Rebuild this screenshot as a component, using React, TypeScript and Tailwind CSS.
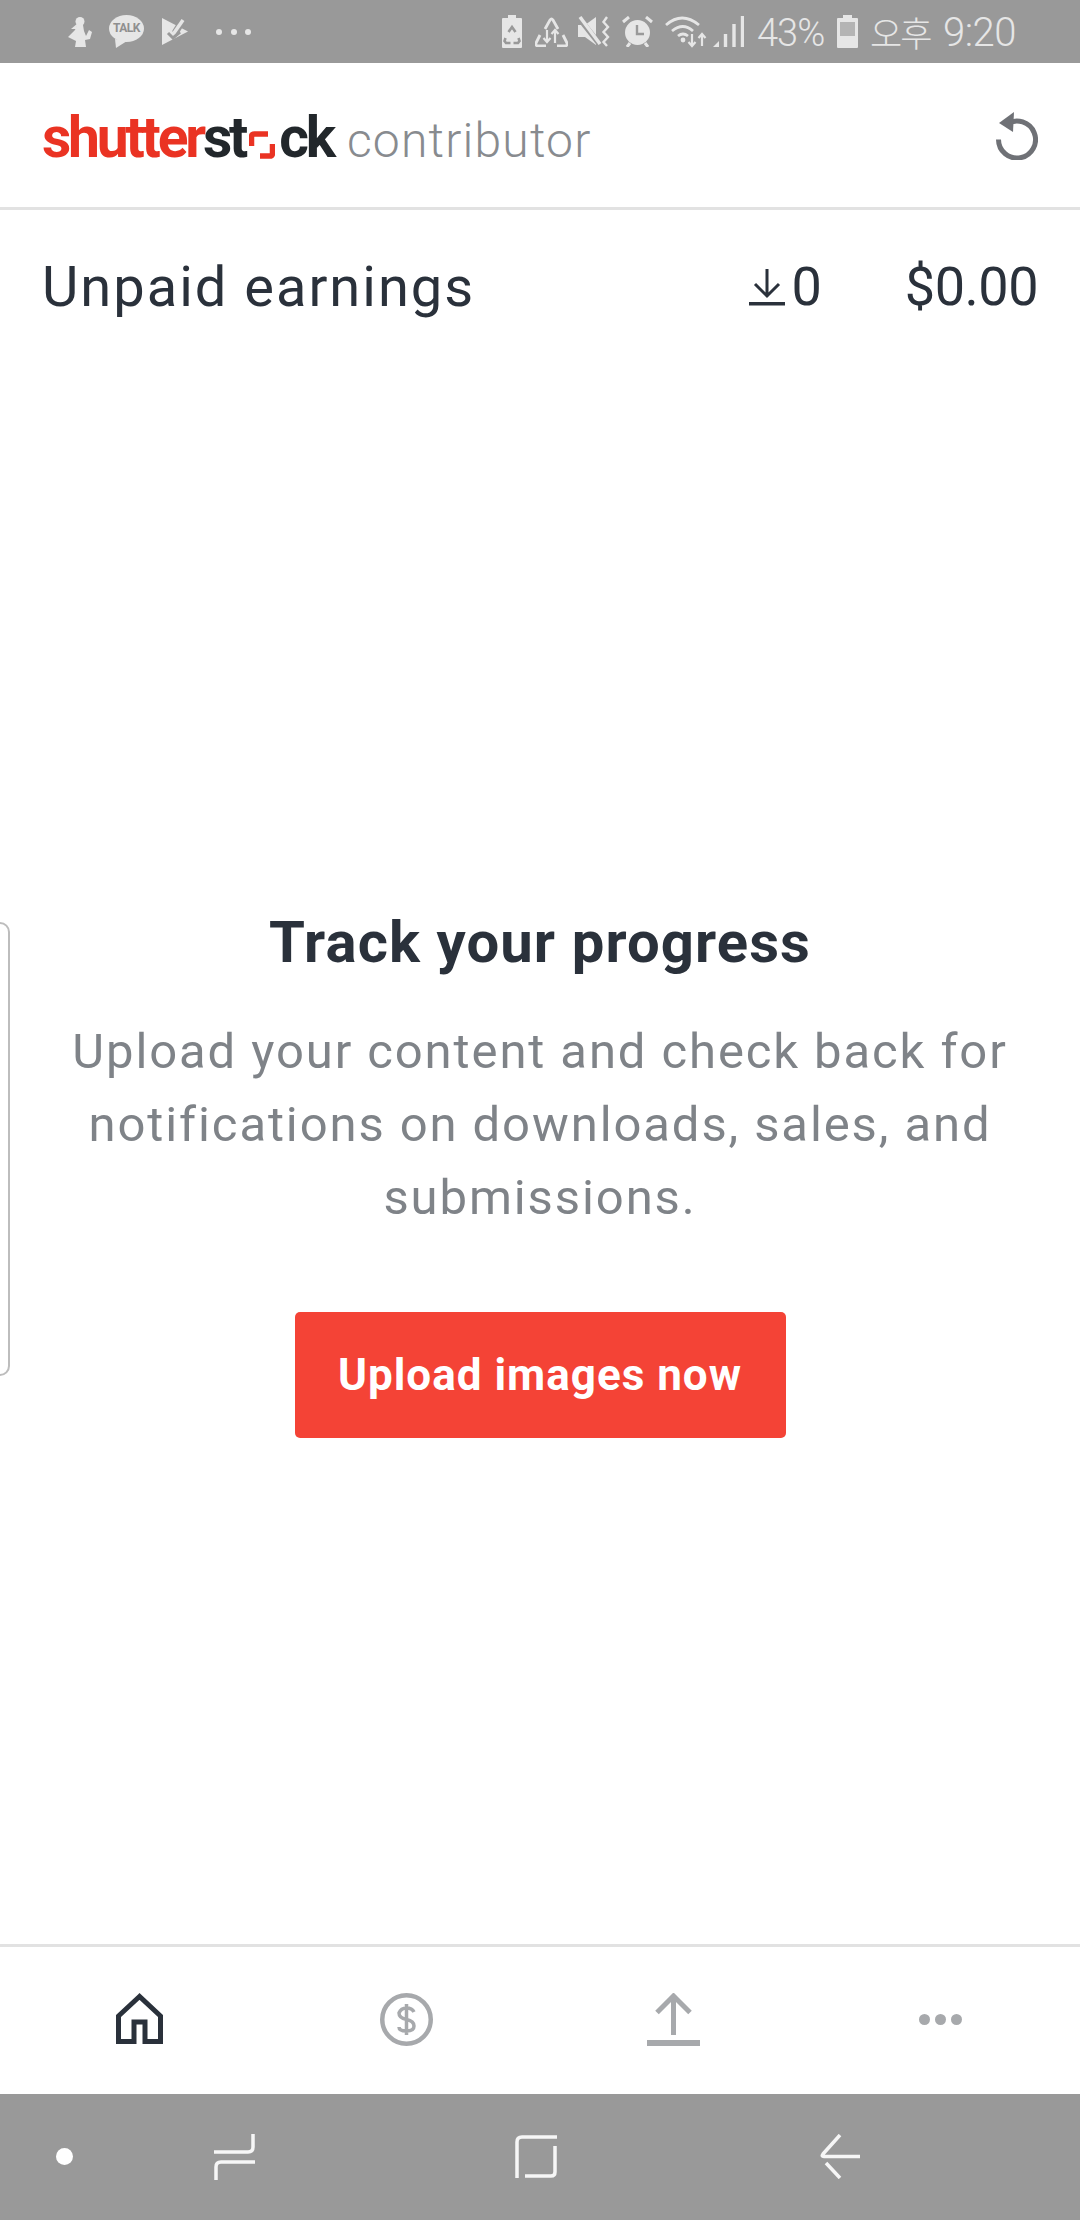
import type { ReactNode } from "react";

const roboto = "font-['Roboto',sans-serif]";

function Svg({ w, h, children }: { w: number; h: number; children: ReactNode }) {
  return (
    <svg width={w} height={h} viewBox={`0 0 ${w} ${h}`} className="block shrink-0">
      {children}
    </svg>
  );
}

function StatusBar() {
  const c = "#e6e6e6";
  const bg = "#999999";
  return (
    <div className={`flex h-[63px] shrink-0 items-center justify-between bg-[#999999] pl-[68px] pr-[67px] ${roboto}`}>
      <div className="flex items-center">
        <Svg w={24} h={30}>
          <circle cx="12" cy="4.5" r="4.5" fill={c} />
          <path d="M9 8h6l1 6 2 5 3-6 3 2-2 7-5 1 1 7H7l1-6-8-4 7-7z" fill={c} />
          <path d="M10 6L3 12h5" fill={c} />
        </Svg>
        <div className="relative ml-[17px] h-[33px] w-[35px]">
          <Svg w={35} h={33}>
            <ellipse cx="17.5" cy="13.5" rx="17.5" ry="13.5" fill={c} />
            <path d="M6 24l1 9 11-7z" fill={c} />
          </Svg>
          <span className="absolute left-0 top-[6px] w-[35px] text-center text-[12px] font-bold leading-[15px] tracking-[-0.5px] text-[#8f8f8f]">
            TALK
          </span>
        </div>
        <div className="ml-[18px]">
          <Svg w={26} h={27}>
            <path d="M0 0l26 13.5L0 27z" fill={c} />
            <path d="M13 15L21 2" stroke={bg} strokeWidth="7" />
            <path d="M12 15l9-13" stroke={c} strokeWidth="3.5" />
            <path d="M6 15l5 5 7-6" fill="none" stroke={bg} strokeWidth="3" />
          </Svg>
        </div>
        <div className="ml-[28px] flex gap-[8.5px]">
          <div className="size-[6px] rounded-full bg-[#e6e6e6]" />
          <div className="size-[6px] rounded-full bg-[#e6e6e6]" />
          <div className="size-[6px] rounded-full bg-[#e6e6e6]" />
        </div>
      </div>
      <div className="flex items-center">
        <Svg w={20} h={33}>
          <path d="M6 0h8v3h5a1 1 0 011 1v28a1 1 0 01-1 1H1a1 1 0 01-1-1V4a1 1 0 011-1h5z" fill={c} />
          <path d="M6.5 17l3.5-5 3.5 5M3.5 23l-1 3 1.5 2h4.5M16.5 23l1 3-1.5 2h-4.5" fill="none" stroke={bg} strokeWidth="2.6" />
        </Svg>
        <div className="ml-[13px]">
          <Svg w={33} h={30}>
            <path d="M10 12l5-9q1.5-2 3 0l5 9M5 18L1 26q-.5 3 2 3h8M28 18l4 8q.5 3-2 3h-8" fill="none" stroke={c} strokeWidth="2.8" />
            <path d="M12 13v12M8.5 21l3.5 4 3.5-4M20 26V13M16.5 17l3.5-4 3.5 4" fill="none" stroke={c} strokeWidth="2.2" />
          </Svg>
        </div>
        <div className="ml-[10px]">
          <Svg w={32} h={31}>
            <path d="M0 9h7l11-8v28L7 21H0z" fill={c} />
            <path d="M1 2l22 28" stroke={bg} strokeWidth="5.5" />
            <path d="M2 1l20 27" stroke={c} strokeWidth="3.5" />
            <path d="M29 1l-3.5 5 4.5 5-4.5 5 4.5 5-4.5 5 3.5 4" fill="none" stroke={c} strokeWidth="2.4" />
          </Svg>
        </div>
        <div className="ml-[12px]">
          <Svg w={31} h={31}>
            <circle cx="15.5" cy="16.5" r="12.5" fill={c} />
            <path d="M1 6l6-5M30 6l-6-5M5 31l3-4M26 31l-3-4" stroke={c} strokeWidth="3" />
            <path d="M15 9v9h7" fill="none" stroke={bg} strokeWidth="2.4" />
          </Svg>
        </div>
        <div className="ml-[12px]">
          <Svg w={42} h={33}>
            <path d="M1 10q16-14 33 0M7 16q11-9 21 0M13 21q5-4 10 0" fill="none" stroke={c} strokeWidth="2.8" />
            <circle cx="18" cy="25" r="2.4" fill={c} />
            <path d="M27 19v12M23.5 27l3.5 4 3.5-4M37 31V19M33.5 23l3.5-4 3.5 4" fill="none" stroke={c} strokeWidth="2.2" />
          </Svg>
        </div>
        <div className="ml-[6px]">
          <Svg w={31} h={31}>
            <path d="M0 31l6-6v6z" fill={c} />
            <path d="M12.5 31V18M21 31V8M29.5 31V0" stroke={c} strokeWidth="3.4" />
          </Svg>
        </div>
        <span className="ml-[13px] mt-[3px] w-[68px] text-[38px] font-light leading-[60px] tracking-[-1px] text-[#e6e6e6] whitespace-nowrap">
          43%
        </span>
        <div className="ml-[12px]">
          <Svg w={21} h={33}>
            <path d="M6 0h9v3h5a1 1 0 011 1v28a1 1 0 01-1 1H1a1 1 0 01-1-1V4a1 1 0 011-1h5z" fill={c} />
            <rect x="3" y="7" width="15" height="14" fill="#b4b4b4" />
          </Svg>
        </div>
        <span className="ml-[12px] w-[62px] font-['Noto_Sans_CJK_KR',sans-serif] text-[35px] font-light leading-[63px] tracking-[-2px] text-[#e6e6e6] whitespace-nowrap">
          오후
        </span>
        <span className="ml-[11px] mt-[3px] w-[70px] text-[40px] font-light leading-[60px] tracking-[-0.5px] text-[#e6e6e6] whitespace-nowrap">
          9:20
        </span>
      </div>
    </div>
  );
}

function Header() {
  return (
    <div className="flex h-[147px] shrink-0 items-center justify-between border-b-[3px] border-[#e2e2e2] pl-[42px] pr-[42px]">
      <div className="mt-[8px] flex items-baseline">
        <span className={`${roboto} flex items-center text-[57px] font-bold leading-[70px] tracking-[-3.2px] text-[#ea3323]`}>
          shutter<span className="text-[#22272b]">st</span>
          <span className="ml-[4px] mr-[4px] mt-[14px] block">
            <Svg w={26} h={28}>
              <path d="M2.5 15V6q0-3 3-3H19" fill="none" stroke="#ea3323" strokeWidth="5.5" />
              <path d="M23.5 13v9q0 3-3 3H11" fill="none" stroke="#ea3323" strokeWidth="5.5" />
            </Svg>
          </span>
          <span className="text-[#22272b]">ck</span>
        </span>
        <span className={`${roboto} ml-[14px] text-[48px] font-light leading-[70px] tracking-[1.2px] text-[#888b8f]`}>
          contributor
        </span>
      </div>
      <div className="mt-[2px]">
        <Svg w={42} h={48}>
          <path d="M11 12a18.5 18.5 0 11-8.500 15.5" fill="none" stroke="#6f7176" strokeWidth="5" />
          <path d="M18 0l-1 20L3 11z" fill="#6f7176" />
        </Svg>
      </div>
    </div>
  );
}

function Earnings() {
  return (
    <div className={`flex h-[154px] shrink-0 items-center justify-between pl-[42px] pr-[42px] text-[#2a313b] ${roboto}`}>
      <span className="text-[56px] leading-[70px] tracking-[2px]">Unpaid earnings</span>
      <div className="flex items-center">
        <Svg w={36} h={37}>
          <path d="M18 0v26M6 15l12 12 12-12" fill="none" stroke="#2a313b" strokeWidth="3" />
          <rect x="0" y="33" width="36" height="3.5" fill="#2a313b" />
        </Svg>
        <span className="ml-[7px] text-[54px] leading-[70px]">0</span>
        <span className="ml-[83px] text-[54px] leading-[70px] tracking-[-0.5px]">$0.00</span>
      </div>
    </div>
  );
}

function Empty() {
  return (
    <div className={`relative min-h-0 flex-1 ${roboto}`}>
      <div className="absolute left-[-20px] top-[558px] h-[454px] w-[30px] rounded-[10px] border-[2px] border-[#bdbdbd]" />
      <div className="flex flex-col items-center pt-[543px]">
        <h1 className="text-[58px] font-bold leading-[70px] tracking-[1.1px] text-[#2a313b]">Track your progress</h1>
        <p className="mt-[38px] w-[1000px] text-center text-[49px] leading-[73px] tracking-[1.9px] text-[#7f8388]">
          Upload your content and check back for notifications on downloads, sales, and submissions.
        </p>
        <button className="mt-[78px] flex h-[126px] w-[491px] items-center justify-center rounded-[5px] bg-[#f44336] text-[44px] font-bold tracking-[1px] text-white">
          Upload images now
        </button>
      </div>
    </div>
  );
}

function BottomNav() {
  const g = "#a7a9ac";
  return (
    <div className="flex h-[150px] shrink-0 items-center border-t-[3px] border-[#e2e2e2] pb-[3px]">
      <div className="ml-[116px]">
        <Svg w={47} h={52}>
          <path d="M23.5 3.5L2.5 23v25.5H18V29h11v19.5h15.5V23z" fill="none" stroke="#2a313b" strokeWidth="5" />
        </Svg>
      </div>
      <div className="ml-[217px]">
        <Svg w={53} h={53}>
          <circle cx="26.5" cy="26.5" r="24.25" fill="none" stroke={g} strokeWidth="4.5" />
          <path d="M34 19q-2-4-7.500-4T19 20q0 5 7.500 6.500T34 33q0 5-7.500 5T19 34M26.5 11v31" fill="none" stroke={g} strokeWidth="3.5" />
        </Svg>
      </div>
      <div className="ml-[214px]">
        <Svg w={53} h={53}>
          <path d="M26.5 4v38" stroke={g} strokeWidth="5" />
          <path d="M10 19.5L26.5 3 43 19.5" fill="none" stroke={g} strokeWidth="5" />
          <rect x="0" y="47" width="53" height="6" fill={g} />
        </Svg>
      </div>
      <div className="ml-[219px] flex gap-[5px]">
        <div className="size-[11px] rounded-full bg-[#a7a9ac]" />
        <div className="size-[11px] rounded-full bg-[#a7a9ac]" />
        <div className="size-[11px] rounded-full bg-[#a7a9ac]" />
      </div>
    </div>
  );
}

function SystemNav() {
  const w = "#f6f6f6";
  return (
    <div className="flex h-[126px] shrink-0 items-center bg-[#999999] pb-[1px]">
      <div className="ml-[56px] size-[17px] rounded-full bg-white" />
      <div className="ml-[141px]">
        <Svg w={41} h={46}>
          <path d="M39 0v13q0 5-5 5H0M41 28H7q-5 0-5 5v13" fill="none" stroke={w} strokeWidth="3.5" />
        </Svg>
      </div>
      <div className="ml-[260px]">
        <Svg w={42} h={43}>
          <path d="M2 43V7q0-5 5-5h35M40 11v26q0 4-4 4H10" fill="none" stroke={w} strokeWidth="3.5" />
        </Svg>
      </div>
      <div className="ml-[263px]">
        <Svg w={40} h={45}>
          <path d="M20 1L3 20q-2 2.5 1 2.5h36M6 29l14 15" fill="none" stroke={w} strokeWidth="3.5" />
        </Svg>
      </div>
    </div>
  );
}

export default function App() {
  return (
    <div className="flex h-[2220px] w-[1080px] flex-col overflow-hidden bg-white">
      <StatusBar />
      <Header />
      <Earnings />
      <Empty />
      <BottomNav />
      <SystemNav />
    </div>
  );
}
